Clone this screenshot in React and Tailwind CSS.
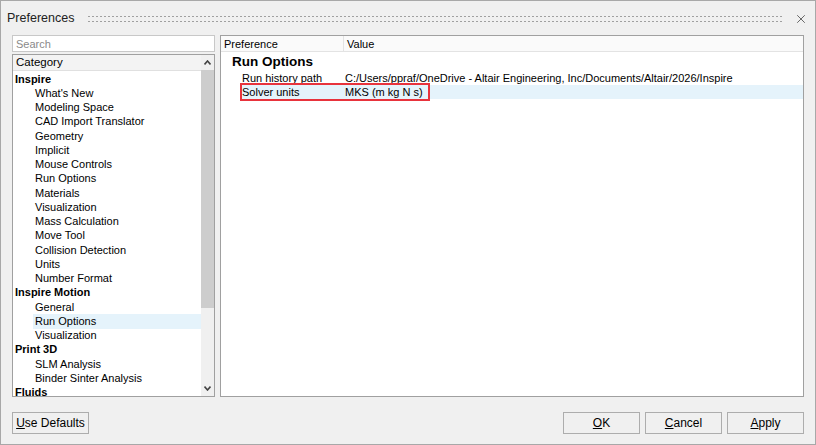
import React from "react"
import { X } from "lucide-react"

const categories = [
  { label: "Inspire", bold: true },
  { label: "What's New" },
  { label: "Modeling Space" },
  { label: "CAD Import Translator" },
  { label: "Geometry" },
  { label: "Implicit" },
  { label: "Mouse Controls" },
  { label: "Run Options" },
  { label: "Materials" },
  { label: "Visualization" },
  { label: "Mass Calculation" },
  { label: "Move Tool" },
  { label: "Collision Detection" },
  { label: "Units" },
  { label: "Number Format" },
  { label: "Inspire Motion", bold: true },
  { label: "General" },
  { label: "Run Options", selected: true },
  { label: "Visualization" },
  { label: "Print 3D", bold: true },
  { label: "SLM Analysis" },
  { label: "Binder Sinter Analysis" },
  { label: "Fluids", bold: true },
]

function Btn({ children, className = "" }) {
  return (
    <button
      type="button"
      className={`h-[22px] border border-[#adadad] bg-[#f0f0f0] text-[12px] text-black flex items-center justify-center ${className}`}
    >
      {children}
    </button>
  )
}

export default function App() {
  return (
    <div
      className="w-[816px] h-[445px] bg-[#f0f0f0] border border-[#a8a8a8] flex flex-col text-black overflow-hidden"
      style={{ fontFamily: '"Liberation Sans", Arial, sans-serif' }}
    >
      {/* Title bar */}
      <div className="h-[34px] flex items-center pl-[6px] pr-[7px] shrink-0">
        <span className="text-[12.5px] text-[#222] pt-[1px]">Preferences</span>
        <div className="flex-1 ml-[13px] mr-[10px] h-[10px] mt-[1px] bg-[radial-gradient(circle,#a0a0a0_0.8px,transparent_1.1px)] bg-[length:4px_5px]" />
        <X size={14} strokeWidth={1.5} className="text-[#555] mt-[1px]" />
      </div>

      {/* Main */}
      <div className="flex px-[11px] gap-[5px] h-[362px] shrink-0">
        {/* Left column */}
        <div className="w-[203px] flex flex-col gap-[2px]">
          <div className="h-[17px] bg-white border border-[#c8c8c8] flex items-center px-[3px] pt-[1px] text-[11px] text-[#8a8a8a]">
            Search
          </div>
          <div className="flex-1 bg-white border border-[#a0a0a0] flex min-h-0">
            <div className="flex-1 flex flex-col min-w-0">
              <div className="h-[16px] bg-[#f3f3f3] border-b border-[#e0e0e0] flex items-center px-[3px] pt-[1px] text-[11.5px]">
                Category
              </div>
              <div className="flex flex-col pt-[1px]">
                {categories.map((c, i) => (
                  <div
                    key={i}
                    className={`h-[14.25px] flex items-center text-[11px] leading-none whitespace-nowrap ${
                      c.bold ? "font-bold pl-[2px]" : "pl-[22px]"
                    }`}
                  >
                    <span
                      className={`h-full flex items-center ${
                        c.selected ? "bg-[#e5f3fb] flex-1 -ml-[2px] pl-[2px]" : ""
                      }`}
                    >
                      {c.label}
                    </span>
                  </div>
                ))}
              </div>
            </div>
            {/* Scrollbar */}
            <div className="w-[13px] bg-[#f0f0f0] flex flex-col">
              <div className="h-[15px] flex items-center justify-center">
                <svg width="7" height="5" viewBox="0 0 7 5">
                  <path d="M0.5 4.5 L3.5 1 L6.5 4.5" fill="none" stroke="#444" strokeWidth="1.6" />
                </svg>
              </div>
              <div className="h-[238px] bg-[#cdcdcd]" />
              <div className="flex-1" />
              <div className="h-[15px] flex items-center justify-center">
                <svg width="7" height="5" viewBox="0 0 7 5">
                  <path d="M0.5 0.5 L3.5 4 L6.5 0.5" fill="none" stroke="#444" strokeWidth="1.6" />
                </svg>
              </div>
            </div>
          </div>
        </div>

        {/* Right panel */}
        <div className="flex-1 bg-white border border-[#a0a0a0] flex flex-col">
          <div className="h-[16px] flex border-b border-[#e3e3e3] bg-[#fafafa] text-[11px] shrink-0">
            <div className="w-[123px] border-r border-[#e3e3e3] flex items-center pl-[3px] pt-[1px]">Preference</div>
            <div className="flex-1 flex items-center pl-[3px] pt-[1px]">Value</div>
          </div>
          <div className="h-[18px] flex items-center pl-[11px] pt-[3px] text-[13.5px] font-bold">
            Run Options
          </div>
          <div className="h-[15px] flex items-center pt-[1px] text-[11px] whitespace-nowrap">
            <div className="w-[124px] pl-[21px]">Run history path</div>
            <div>C:/Users/ppraf/OneDrive - Altair Engineering, Inc/Documents/Altair/2026/Inspire</div>
          </div>
          <div className="h-[14px] flex items-center pt-[1px] text-[11px] ml-[20px] bg-[#e5f3fb] relative">
            <div className="w-[104px] pl-[1px]">Solver units</div>
            <div>MKS (m kg N s)</div>
            <div className="absolute left-[-1px] top-[-2px] w-[190px] h-[18px] border-2 border-[#e8333c]" />
          </div>
        </div>
      </div>

      {/* Bottom buttons */}
      <div className="flex items-center px-[11px] pt-[15px]">
        <Btn className="w-[77px]">
          <span><span className="underline">U</span>se Defaults</span>
        </Btn>
        <div className="flex-1" />
        <div className="flex gap-[5px]">
          <Btn className="w-[77px]">
            <span><span className="underline">O</span>K</span>
          </Btn>
          <Btn className="w-[77px]">
            <span><span className="underline">C</span>ancel</span>
          </Btn>
          <Btn className="w-[77px]">
            <span><span className="underline">A</span>pply</span>
          </Btn>
        </div>
      </div>
    </div>
  )
}
